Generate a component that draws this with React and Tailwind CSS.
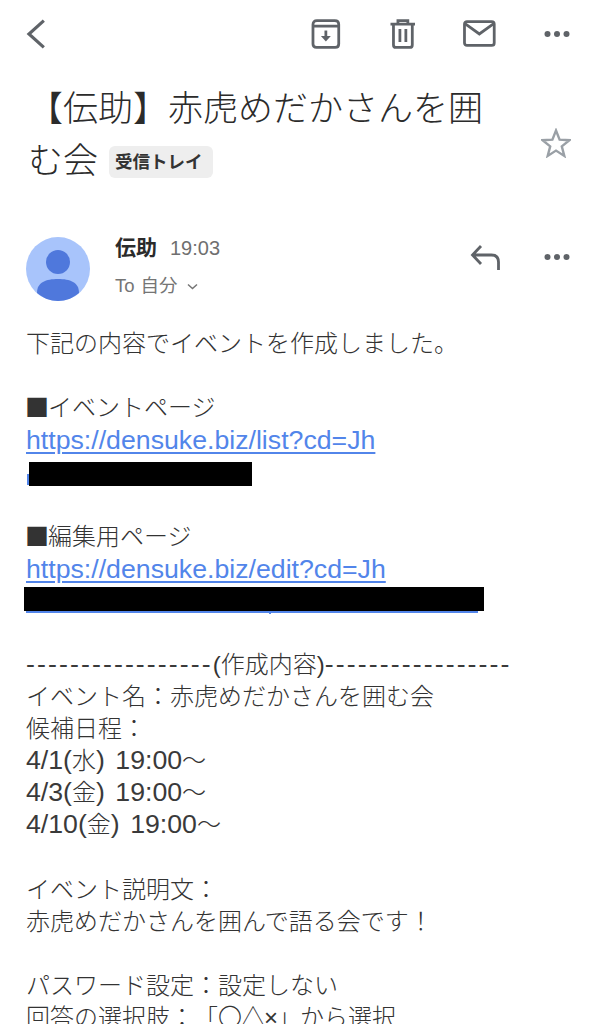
import React from "react";

const font = { fontFamily: '"Liberation Sans", "Noto Sans CJK JP", sans-serif' };

function Dots() {
  return (
    <svg width="28" height="8" viewBox="0 0 28 8" fill="#5f6368">
      <circle cx="4.5" cy="4" r="3" />
      <circle cx="14" cy="4" r="3" />
      <circle cx="23.5" cy="4" r="3" />
    </svg>
  );
}

function Toolbar() {
  return (
    <div className="flex h-[66px] items-center pl-[26px] pr-[30px] pt-[1px]">
      <svg width="20" height="30" viewBox="0 0 20 30" fill="none" stroke="#5f6368" strokeWidth="3.2">
        <path d="M18 1.5 3 15l15 13.5" />
      </svg>
      <svg className="ml-[265px]" width="30" height="30" viewBox="0 0 30 30" fill="none" stroke="#5f6368" strokeWidth="2.8">
        <path d="M2 7V5.5Q2 1.6 6 1.6H24Q28 1.6 28 5.5V7M2 7H28V25Q28 28.5 24.5 28.5H5.5Q2 28.5 2 25Z" />
        <path d="M15 11.5V20" />
        <path d="M10 17h10l-5 5.5z" fill="#5f6368" stroke="none" />
      </svg>
      <svg className="ml-[49px]" width="26" height="30" viewBox="0 0 26 30" fill="none" stroke="#5f6368" strokeWidth="2.8">
        <path d="M0.5 5H25.5M8 5V1.5H18V5" />
        <path d="M3.5 5V26Q3.5 28.5 6 28.5H20Q22.5 28.5 22.5 26V5" />
        <path d="M10 10V23M16 10V23" />
      </svg>
      <svg className="ml-[48px]" width="33" height="27" viewBox="0 0 33 27" fill="none" stroke="#5f6368" strokeWidth="2.8">
        <rect x="1.5" y="1.5" width="30" height="24" rx="2.5" />
        <path d="M2 3.5 16.500 14 31 3.500" />
      </svg>
      <div className="ml-[47px]">
        <Dots />
      </div>
    </div>
  );
}

function Subject() {
  return (
    <div className="mt-[17px] flex pl-[28px]">
      <h1 className="w-[480px] text-[35px] font-light leading-[52px] text-[#2b2b2b]">
        <span>【伝助】赤虎めだかさんを囲む会</span>
        <span className="relative -top-[2px] ml-[11px] inline-block h-[32px] rounded-[6px] bg-[#eeeeee] pl-[6px] pr-[10px] align-middle text-[17.5px] font-bold leading-[32px] text-[#333333]">
          受信トレイ
        </span>
      </h1>
      <svg className="ml-[33px] mt-[45px]" width="30" height="30" viewBox="0 0 30 30" fill="none" stroke="#9aa0a6" strokeWidth="2.4">
        <path d="M15 2.500 18.600 11.600 28.400 12.200 20.800 18.400 23.300 27.900 15 22.600 6.700 27.900 9.200 18.400 1.600 12.200 11.400 11.600Z" />
      </svg>
    </div>
  );
}

function Sender() {
  return (
    <div className="mt-[50px] flex pl-[26px] pr-[30px]">
      <svg width="64" height="64" viewBox="0 0 64 64">
        <circle cx="32" cy="32" r="32" fill="#a8c4fb" />
        <circle cx="32" cy="25" r="12" fill="#4f78dc" />
        <path d="M11 56C11 45 20 42 32 42S53 45 53 56C47 61 40 64 32 64S17 61 11 56Z" fill="#4f78dc" />
      </svg>
      <div className="ml-[25px] flex-1">
        <div className="flex h-[22px] items-center">
          <span className="text-[21px] font-bold text-[#2b2b2b]">伝助</span>
          <span className="ml-[13px] text-[20px] text-[#6f6f6f]">19:03</span>
        </div>
        <div className="mt-[16px] flex h-[22px] items-center text-[18.5px] text-[#757575]">
          <span>To</span>
          <span className="ml-[6px]">自分</span>
          <svg className="ml-[9px]" width="11" height="7" viewBox="0 0 11 7" fill="none" stroke="#757575" strokeWidth="1.5">
            <path d="M1 1.500 5.500 5.500 10 1.500" />
          </svg>
        </div>
      </div>
      <div className="flex h-[40px] items-center">
        <svg width="30" height="27" viewBox="0 0 30 27" fill="none" stroke="#5f6368" strokeWidth="2.8">
          <path d="M28.500 26V18Q28.500 11 21.500 11H3M11 2 2.500 11 11 20" />
        </svg>
        <div className="ml-[43px]">
          <Dots />
        </div>
      </div>
    </div>
  );
}

const Line = ({ children }) => <div className="h-[32.1px] whitespace-nowrap">{children}</div>;
const Latin = ({ children }) => (
  <span className="text-[26.7px] leading-none text-[#3a3a3a] [word-spacing:3px]">{children}</span>
);
const Link = ({ children }) => (
  <span className="text-[26.7px] text-[#5285ea] underline decoration-[1.5px] underline-offset-[3px]">{children}</span>
);
const Square = () => <span className="-ml-[1px] mr-[-1px] font-['Noto_Sans_CJK_JP'] font-normal leading-none">■</span>;
const Dashes = () => <span className="text-[26.7px] leading-none tracking-[2.1px] text-[#3a3a3a]">-----------------</span>;

function Body() {
  return (
    <div className="relative mt-[27px] pl-[26px] text-[24px] font-light leading-[32.1px] text-[#333333] [text-spacing-trim:space-all]">
      <Line>下記の内容でイベントを作成しました。</Line>
      <Line />
      <Line><Square />イベントページ</Line>
      <Line><Link>https://densuke.biz/list?cd=Jh</Link></Line>
      <Line />
      <Line />
      <Line><Square />編集用ページ</Line>
      <Line><Link>https://densuke.biz/edit?cd=Jh</Link></Line>
      <Line />
      <Line />
      <Line><Dashes />(作成内容)<Dashes /></Line>
      <Line>イベント名：赤虎めだかさんを囲む会</Line>
      <Line>候補日程：</Line>
      <Line><Latin>4/1(</Latin>水<Latin>) 19:00</Latin>～</Line>
      <Line><Latin>4/3(</Latin>金<Latin>) 19:00</Latin>～</Line>
      <Line><Latin>4/10(</Latin>金<Latin>) 19:00</Latin>～</Line>
      <Line />
      <Line>イベント説明文：</Line>
      <Line>赤虎めだかさんを囲んで語る会です！</Line>
      <Line />
      <Line>パスワード設定：設定しない</Line>
      <Line>回答の選択肢：「<span className="tracking-[-1px]">〇△×」</span>から選択</Line>
      {/* blacked out parts of the links */}
      <div className="absolute left-[27px] top-[146px] h-[11px] w-[2px] bg-[#5285ea]" />
      <div className="absolute left-[29px] top-[134px] h-[24px] w-[223px] bg-black" />
      <div className="absolute left-[26px] top-[283px] h-[2px] w-[452px] bg-[#5285ea]" />
      <div className="absolute left-[269px] top-[283px] h-[3px] w-[2px] bg-[#5285ea]" />
      <div className="absolute left-[24px] top-[259px] h-[24px] w-[460px] bg-black" />
    </div>
  );
}

export default function App() {
  return (
    <div className="h-[1024px] w-[601px] overflow-hidden bg-white" style={font}>
      <Toolbar />
      <Subject />
      <Sender />
      <Body />
    </div>
  );
}
